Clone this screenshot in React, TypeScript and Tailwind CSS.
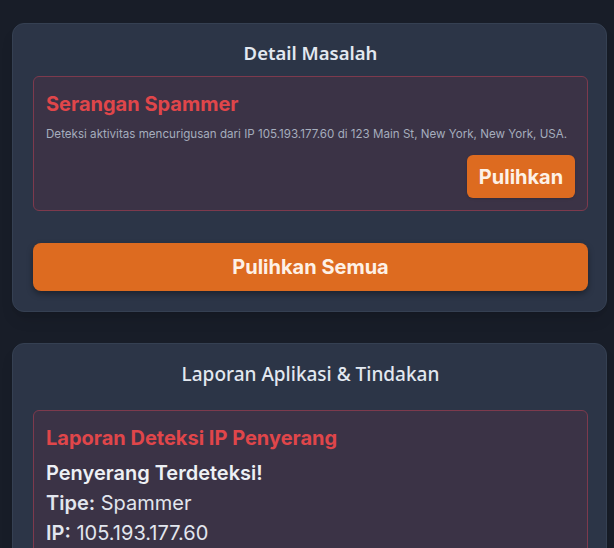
import React from "react";

export default function App() {
  return (
    <div
      className="min-h-[548px] w-full bg-[#181d28] pl-3 pr-[7px] pt-[23px] pb-6"
      style={{ fontFamily: "Inter, 'Noto Sans', sans-serif" }}
    >
      <div className="rounded-xl border border-[#354052] bg-[#2c3547] pl-5 pr-[18px] pt-[15px] pb-5 shadow-lg">
        <h2 className="text-center text-[18.5px] font-semibold leading-[28px] text-[#e2e8f0] [font-family:'Noto_Sans',sans-serif]">
          Detail Masalah
        </h2>
        <div className="mt-[9px] rounded-md border border-[#7d3a4d] bg-[#3b3346] px-3 pt-[13px] pb-3">
          <h3 className="text-[20px] font-bold leading-[28px] text-[#e0464a]">
            Serangan Spammer
          </h3>
          <p className="mt-[8px] text-[11.6px] leading-[16px] text-[#a5adbd]">
            Deteksi aktivitas mencurigusan dari IP 105.193.177.60 di 123 Main St, New York, New York, USA.
          </p>
          <div className="mt-[13px] flex justify-end">
            <button className="h-[43px] w-[108px] rounded-md bg-[#dd6b20] text-[20px] font-bold text-[#fdf1e6] shadow">
              Pulihkan
            </button>
          </div>
        </div>
        <button className="mt-8 h-[48px] w-full rounded-lg bg-[#dd6b20] text-[20px] font-bold text-[#fdf1e6] shadow-[0_3px_6px_rgba(0,0,0,0.35)]">
          Pulihkan Semua
        </button>
      </div>

      <div className="mt-[31px] rounded-xl border border-[#354052] bg-[#2c3547] pl-5 pr-[18px] pt-[16px] pb-5 shadow-lg">
        <h2 className="text-center text-[19px] font-medium leading-[28px] text-[#e2e8f0] [font-family:'Noto_Sans',sans-serif]">
          Laporan Aplikasi &amp; Tindakan
        </h2>
        <div className="mt-[22px] rounded-md border border-[#7d3a4d] bg-[#3b3346] px-3 pt-[13px] pb-3">
          <h3 className="text-[20px] font-bold leading-[28px] text-[#e0464a]">
            Laporan Deteksi IP Penyerang
          </h3>
          <p className="mt-[6px] text-[20px] font-semibold leading-[30px] text-[#edf0f5]">
            Penyerang Terdeteksi!
          </p>
          <p className="text-[20px] leading-[30px] text-[#e2e6ee]">
            <span className="font-semibold">Tipe:</span> Spammer
          </p>
          <p className="text-[20px] leading-[30px] text-[#e2e6ee]">
            <span className="font-semibold">IP:</span> 105.193.177.60
          </p>
        </div>
      </div>
    </div>
  );
}
